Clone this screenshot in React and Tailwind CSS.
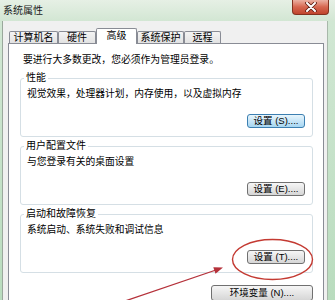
import React from "react";

const FONT = "font-['Liberation_Sans','Noto_Sans_CJK_SC',sans-serif]";

function Btn({ children, def, className = "" }) {
  return (
    <div
      className={
        "h-[14px] flex items-center justify-center rounded-[3px] border text-[9.5px] leading-[12px] whitespace-nowrap " +
        (def
          ? "border-[#3c7fb1] bg-linear-to-b from-[#e8f5fc] to-[#a6d6f2] "
          : "border-[#707070] bg-linear-to-b from-[#f6f6f6] to-[#d6d6d6] ") +
        className
      }
    >
      {children}
    </div>
  );
}

function Group({ title, desc, btn, def, className = "" }) {
  return (
    <fieldset
      className={
        "border border-[#d5dfe5] rounded-[3px] pl-[6px] pr-[7px] pt-[4px] pb-[8px] " + className
      }
    >
      <legend className="text-[10px] leading-[12px] px-[2px] ml-[-3px]">{title}</legend>
      <div className="text-[9.75px] leading-[12px] whitespace-nowrap">{desc}</div>
      <div className="flex justify-end mt-[14px]">
        <Btn def={def} className="w-[58px]">
          {btn}
        </Btn>
      </div>
    </fieldset>
  );
}

function Tab({ children, w, selected }) {
  if (selected) {
    return (
      <div
        className={
          "relative z-10 h-[16px] mb-[-1px] bg-white border-t border-l border-r border-[#898c95] rounded-t-[2px] flex items-start justify-center pt-[1px] text-[10px] leading-[12px] " +
          w
        }
      >
        {children}
      </div>
    );
  }
  return (
    <div
      className={
        "h-[12px] bg-linear-to-b from-[#f4f4f4] to-[#e2e2e2] border-t border-l border-r border-[#898c95] rounded-t-[2px] flex items-center justify-center text-[10px] leading-[12px] " +
        w
      }
    >
      {children}
    </div>
  );
}

export default function App() {
  return (
    <div
      className={
        "relative w-[335px] h-[300px] overflow-hidden bg-linear-to-b from-[#d3e8d5] to-[#b9dcbe] text-black " +
        FONT
      }
    >
      {/* title bar */}
      <div className="h-[21px] flex items-start bg-linear-to-b from-[#e6f0e5] to-[#d2e6d3]">
        <div className="pl-[3px] pt-[5px] text-[10px] leading-[12px] text-[#1a1a1a]">系统属性</div>
        <div className="ml-auto mr-[6px] w-[37px] h-[15px] rounded-b-[4px] border border-t-0 border-[#83321f] bg-linear-to-b from-[#eab0a2] via-[#d6664f] to-[#c0452d] flex items-center justify-center">
          <svg width="12" height="10" viewBox="0 0 12 10">
            <path d="M2 1 L10 9 M10 1 L2 9" stroke="#5a1a10" strokeWidth="3.6" strokeLinecap="round" />
            <path d="M2 1 L10 9 M10 1 L2 9" stroke="#ffffff" strokeWidth="2" strokeLinecap="round" />
          </svg>
        </div>
      </div>

      {/* body */}
      <div className="flex h-[279px]">
        <div className="w-[3px] border-r border-[#9aa89c]" />
        <div className="w-[324px] bg-[#f0f0f0] pt-[7px] pl-[5px]">
          {/* tabs */}
          <div className="flex items-end h-[15px] pl-[1px]">
            <Tab w="w-[49px]">计算机名</Tab>
            <Tab w="w-[38px]">硬件</Tab>
            <Tab w="w-[41px]" selected>
              高级
            </Tab>
            <Tab w="w-[47px]">系统保护</Tab>
            <Tab w="w-[37px]">远程</Tab>
          </div>
          {/* panel */}
          <div className="w-[316px] h-[260px] border border-[#898c95] bg-white pl-[11px] pr-[10px] pt-[10px]">
            <div className="pl-[3px] text-[9.8px] leading-[12px] whitespace-nowrap">
              要进行大多数更改，您必须作为管理员登录。
            </div>
            <Group
              className="mt-[6px]"
              title="性能"
              desc="视觉效果，处理器计划，内存使用，以及虚拟内存"
              btn="设置 (S)...."
              def
            />
            <Group className="mt-[3px]" title="用户配置文件" desc="与您登录有关的桌面设置" btn="设置 (E)...." />
            <Group
              className="mt-[3px]"
              title="启动和故障恢复"
              desc="系统启动、系统失败和调试信息"
              btn="设置 (T)...."
            />
            <div className="flex justify-end mt-[12px]">
              <Btn className="w-[102px] h-[16px]">环境变量 (N)....</Btn>
            </div>
          </div>
        </div>
        <div className="flex-1 border-l border-[#a8b8aa]" />
      </div>

      {/* annotation overlay */}
      <svg className="absolute left-0 top-0 pointer-events-none" width="335" height="300" viewBox="0 0 335 300">
        <ellipse cx="272.5" cy="259.5" rx="40" ry="20" fill="none" stroke="#c43a32" strokeWidth="1.4" />
        <line x1="125" y1="301" x2="216" y2="270" stroke="#b5313a" strokeWidth="1.3" />
        <polygon points="223,267.5 215.5,273.8 213.3,267.2" fill="#b5313a" />
      </svg>
    </div>
  );
}
